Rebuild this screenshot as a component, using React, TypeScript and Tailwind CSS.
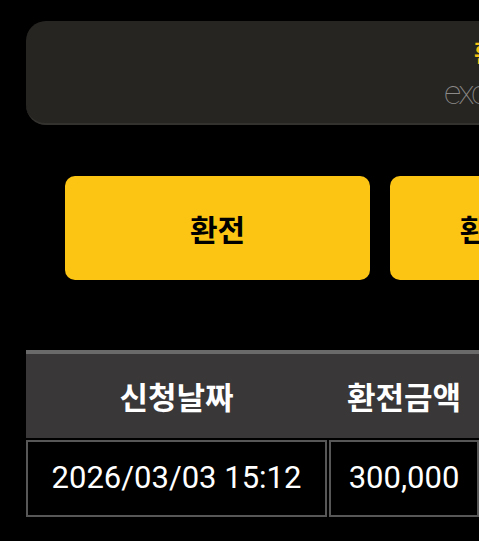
const kr = { fontFamily: '"Noto Sans CJK KR", "Noto Sans", sans-serif' };
const roboto = { fontFamily: 'Roboto, "Noto Sans CJK KR", sans-serif' };

const columns = ["신청날짜", "환전금액", "상태"];
const rows = [["2026/03/03 15:12", "300,000", "대기"]];
const widths = ["w-[301px]", "w-[150px]", "w-[150px]"];

export default function App() {
  return (
    <div className="w-[479px] h-[541px] overflow-hidden bg-black">
      <div className="w-[900px] pl-[26px] pt-[21px]">
        {/* page title card */}
        <div className="h-[104px] w-[720px] rounded-[20px] border-b-2 border-[#34322f] bg-[#272522]">
          <div className="pl-[448px] pt-[15px] text-[25px] font-bold leading-[30px] text-[#f8c114]" style={kr}>
            환전신청
          </div>
          <div className="pl-[418px] pt-[6px] text-[34px] font-thin leading-[40px] tracking-[-3px] text-[#8c8b89]" style={roboto}>
            exchange
          </div>
        </div>

        {/* action buttons */}
        <div className="mt-[51px] flex gap-[20px] pl-[39px]">
          {["환전", "환전신청내역"].map((label) => (
            <button
              key={label}
              className="flex h-[104px] w-[305px] shrink-0 items-center justify-center rounded-[10px] bg-[#fdc513] text-[30px] font-bold text-black"
              style={kr}
            >
              {label}
            </button>
          ))}
        </div>

        {/* history table */}
        <div className="mt-[70px]">
          <div className="flex border-t-4 border-[#6a6a6a] bg-[#393738]">
            {columns.map((c, i) => (
              <div
                key={c}
                className={`${widths[i]} flex h-[84px] items-center justify-center text-[31px] font-bold text-white ${i > 0 ? "ml-[2px]" : ""}`}
                style={kr}
              >
                {c}
              </div>
            ))}
          </div>
          {rows.map((r) => (
            <div key={r[0]} className="mt-[2px] flex gap-[2px]">
              {r.map((v, i) => (
                <div
                  key={i}
                  className={`${widths[i]} flex h-[77px] items-center justify-center border-2 border-[#575757] bg-black text-[31px] text-white`}
                  style={roboto}
                >
                  {v}
                </div>
              ))}
            </div>
          ))}
        </div>
      </div>
    </div>
  );
}
